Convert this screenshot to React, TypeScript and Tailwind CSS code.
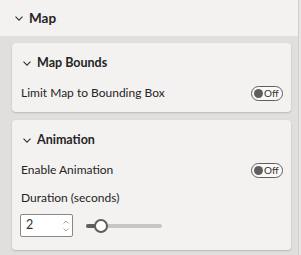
import React from "react";

const Chevron = () => (
  <svg width="8" height="5" viewBox="0 0 8 5" className="shrink-0">
    <path d="M0.5 0.7 L4 4.2 L7.5 0.7" fill="none" stroke="#323130" strokeWidth="1.1" />
  </svg>
);

const Toggle = () => (
  <div className="w-[32px] h-[15px] rounded-full border border-[#605e5c] flex items-center pl-[2px] gap-[1px] bg-[#faf9f8]">
    <div className="w-[9px] h-[9px] rounded-full bg-[#605e5c]" />
    <span className="text-[10px] leading-none text-[#323130]">Off</span>
  </div>
);

const Card = ({ title, children, h }: { title: string; children: React.ReactNode; h: string }) => (
  <div className={`bg-[#f3f2f1] rounded-[4px] shadow-[0_1px_2px_rgba(0,0,0,0.18)] ${h}`}>
    <div className="h-[40px] flex items-center pl-[11px] gap-[6px]">
      <Chevron />
      <span className="text-[12.5px] font-bold text-[#252423]">{title}</span>
    </div>
    <div className="pl-[9px] pr-[8px] flex flex-col">{children}</div>
  </div>
);

export default function App() {
  return (
    <div
      className="w-[301px] h-[255px] bg-[#e1dfdd] flex overflow-hidden"
      style={{ fontFamily: "Lato, 'Noto Sans', sans-serif" }}
    >
      <div className="w-[298px] flex flex-col">
        <div className="h-[36px] bg-[#f3f2f1] flex items-center pl-[15px] gap-[6px]">
          <Chevron />
          <span className="text-[13.5px] font-bold text-[#252423]">Map</span>
        </div>
        <div className="pt-[7px] pl-[12px] pr-[7px] flex flex-col gap-[8px]">
          <Card title="Map Bounds" h="h-[69px]">
            <div className="h-[20px] flex items-center justify-between">
              <span className="text-[12px] text-[#252423]">Limit Map to Bounding Box</span>
              <Toggle />
            </div>
          </Card>
          <Card title="Animation" h="h-[130px]">
            <div className="h-[20px] flex items-center justify-between">
              <span className="text-[12px] text-[#252423]">Enable Animation</span>
              <Toggle />
            </div>
            <div className="mt-[8px] h-[20px] flex items-center">
              <span className="text-[12px] text-[#252423]">Duration (seconds)</span>
            </div>
            <div className="flex items-center mt-[6px]">
              <div className="w-[53px] h-[23px] border border-[#8a8886] rounded-[2px] bg-white flex items-center justify-between pl-[5px] pr-[3px] -ml-[1px]">
                <span className="text-[12.5px] text-[#323130]">2</span>
                <div className="flex flex-col gap-[4px]">
                  <svg width="6" height="4" viewBox="0 0 6 4">
                    <path d="M0.5 3.5 L3 1 L5.5 3.5" fill="none" stroke="#a19f9d" strokeWidth="0.9" />
                  </svg>
                  <svg width="6" height="4" viewBox="0 0 6 4">
                    <path d="M0.5 0.5 L3 3 L5.5 0.5" fill="none" stroke="#a19f9d" strokeWidth="0.9" />
                  </svg>
                </div>
              </div>
              <div className="relative ml-[13px] w-[76px] h-[14px] flex items-center">
                <div className="w-full h-[4px] bg-[#c8c6c4] rounded-[2px] flex">
                  <div className="w-[15px] h-full bg-[#605e5c] rounded-l-[2px]" />
                </div>
                <div className="absolute left-[8px] top-0 w-[14px] h-[14px] rounded-full border-2 border-[#605e5c] bg-white" />
              </div>
            </div>
          </Card>
        </div>
      </div>
      <div className="w-[3px] bg-[#e8e6e4] border-l border-[#d2d0ce]" />
    </div>
  );
}
